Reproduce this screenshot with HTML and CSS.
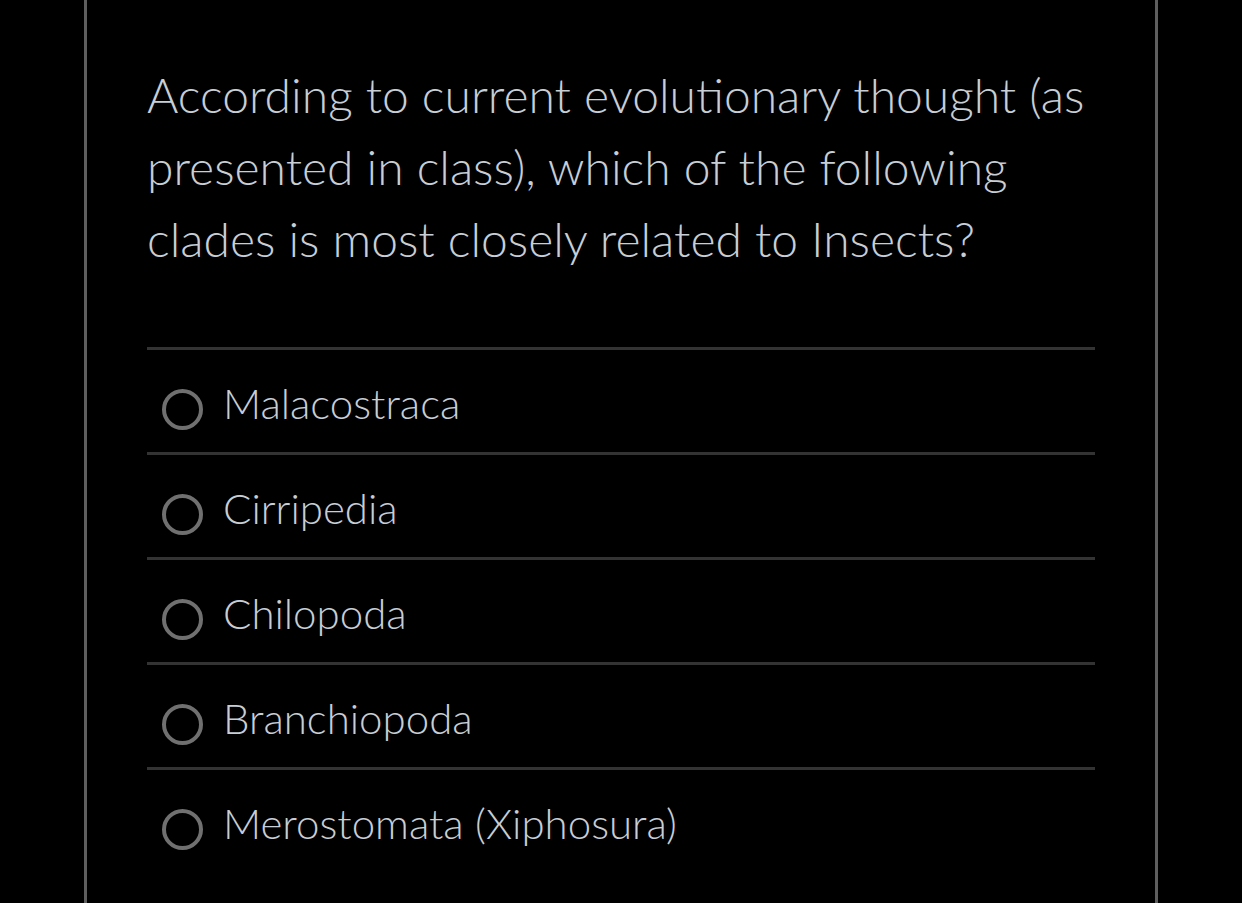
FILE: index.html
```html
<!DOCTYPE html>
<html lang="en">
<head>
<meta charset="utf-8">
<title>Quiz question</title>
<link rel="stylesheet" href="styles.css">
</head>
<body>
<main class="card">
  <p class="question">According to current evolutionary thought (as presented in class), which of the following clades is most closely related to Insects?</p>
  <ul class="options">
    <li class="option"><span class="radio"></span><span class="label">Malacostraca</span></li>
    <li class="option"><span class="radio"></span><span class="label">Cirripedia</span></li>
    <li class="option"><span class="radio"></span><span class="label">Chilopoda</span></li>
    <li class="option"><span class="radio"></span><span class="label">Branchiopoda</span></li>
    <li class="option"><span class="radio"></span><span class="label">Merostomata (Xiphosura)</span></li>
  </ul>
</main>
</body>
</html>
```
FILE: styles.css
```css
html, body {
  margin: 0;
  padding: 0;
  background: #000;
  height: 100%;
  overflow: hidden;
}
body {
  font-family: Lato, "Open Sans", sans-serif;
  font-weight: 300;
  color: #c7ced6;
}
.card {
  box-sizing: border-box;
  margin-left: 84px;
  width: 1074px;
  min-height: 100%;
  border-left: 3px solid #5e5e5e;
  border-right: 3px solid #5e5e5e;
  padding: 59px 60px 0 60px;
}
.question {
  margin: 0 0 72px 0;
  font-size: 48px;
  line-height: 72px;
}
.options {
  list-style: none;
  margin: 0;
  padding: 0;
}
.option {
  box-sizing: border-box;
  display: flex;
  align-items: center;
  height: 105px;
  padding-top: 16px;
  border-top: 3px solid #333;
}
.radio {
  box-sizing: border-box;
  width: 41px;
  height: 41px;
  margin-left: 15px;
  margin-right: 20px;
  border: 4px solid #707070;
  border-radius: 50%;
  flex: none;
}
.label {
  font-size: 42px;
  line-height: 42px;
  margin-bottom: 12px;
}
```
